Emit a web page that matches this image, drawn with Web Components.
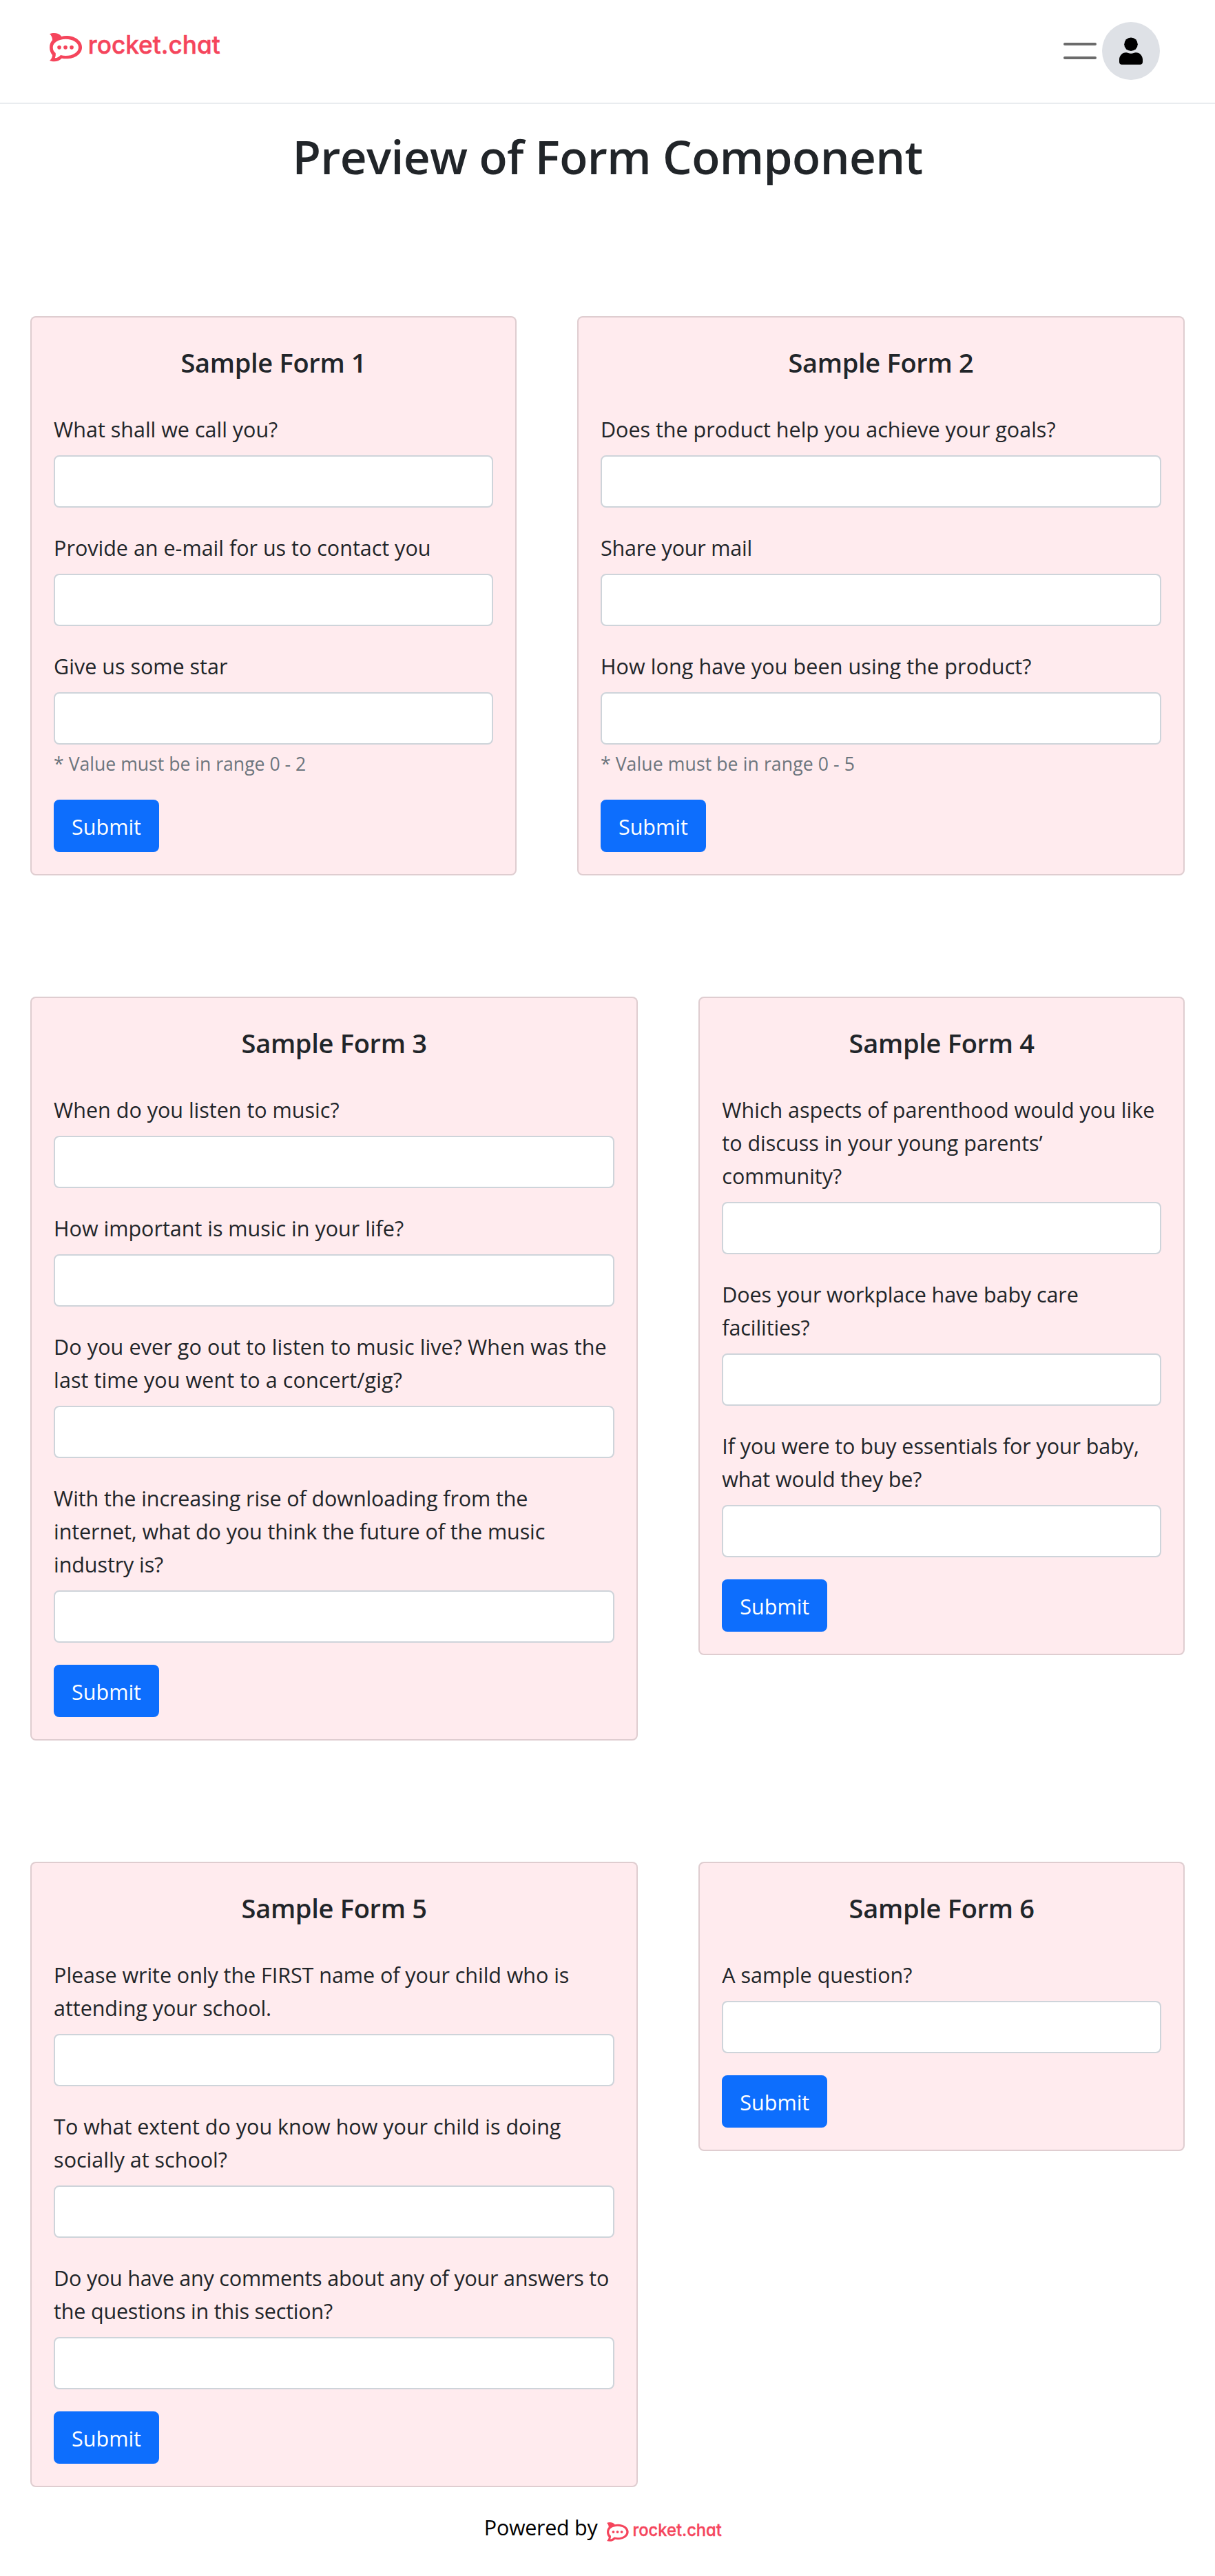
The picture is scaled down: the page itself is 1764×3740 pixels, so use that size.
<!DOCTYPE html>
<html lang="en">
<head>
<meta charset="utf-8">
<title>Preview of Form Component</title>
<style>
  body { margin: 0; background: #fff; color: #212529; font: 400 30.5px/48px "Open Sans", "Noto Sans", sans-serif; }
</style>
</head>
<body>
<preview-page>
  <site-nav slot="nav"></site-nav>
  <span slot="title">Preview of Form Component</span>
  <form-row>
    <form-card size="40" heading="Sample Form 1">
      <form-field>What shall we call you?</form-field>
      <form-field>Provide an e-mail for us to contact you</form-field>
      <form-field hint="* Value must be in range 0 - 2">Give us some star</form-field>
    </form-card>
    <form-card size="50" heading="Sample Form 2">
      <form-field>Does the product help you achieve your goals?</form-field>
      <form-field style="letter-spacing:-.2px">Share your mail</form-field>
      <form-field style="letter-spacing:.1px" hint="* Value must be in range 0 - 5">How long have you been using the product?</form-field>
    </form-card>
  </form-row>
  <form-row>
    <form-card size="50" heading="Sample Form 3">
      <form-field>When do you listen to music?</form-field>
      <form-field>How important is music in your life?</form-field>
      <form-field style="letter-spacing:.1px">Do you ever go out to listen to music live? When was the last time you went to a concert/gig?</form-field>
      <form-field style="letter-spacing:-.1px">With the increasing rise of downloading from the internet, what do you think the future of the music industry is?</form-field>
    </form-card>
    <form-card size="40" heading="Sample Form 4">
      <form-field>Which aspects of parenthood would you like to discuss in your young parents’ community?</form-field>
      <form-field style="letter-spacing:-.1px">Does your workplace have baby care facilities?</form-field>
      <form-field style="letter-spacing:-.1px">If you were to buy essentials for your baby, what would they be?</form-field>
    </form-card>
  </form-row>
  <form-row>
    <form-card size="50" heading="Sample Form 5">
      <form-field style="letter-spacing:-.05px">Please write only the FIRST name of your child who is attending your school.</form-field>
      <form-field>To what extent do you know how your child is doing socially at school?</form-field>
      <form-field style="letter-spacing:-.2px">Do you have any comments about any of your answers to the questions in this section?</form-field>
    </form-card>
    <form-card size="40" heading="Sample Form 6">
      <form-field>A sample question?</form-field>
    </form-card>
  </form-row>
  <powered-by slot="footer">Powered by</powered-by>
</preview-page>

<script>
const define = (name, render) => customElements.define(name, class extends HTMLElement {
  connectedCallback() {
    if (this.shadowRoot) return;
    this.attachShadow({ mode: 'open' }).innerHTML = render(this);
  }
});

define('rocket-logo', () => `
  <style>
    :host { display: block; width: 247.4px; }
    svg { display: block; width: 100%; height: auto; overflow: visible; }
    text { font: 500 110px Inter, sans-serif; font-feature-settings: "cv11"; }
  </style>
  <svg viewBox="0 0 742 124" fill="#f5455c" role="img" aria-label="rocket.chat">
    <path fill-rule="evenodd" d="M0 4C16-2 38-2 52 15C58 13 65 12 72 12C112 12 141 35 141 62C141 90 112 112 72 112C65 112 59 111 53 110C38 126 16 126 0 120C8 113 12 104 12 96C4 87 0 75 0 63C0 50 4 40 12 31C12 20 8 11 0 4ZM70 26C39 26 14 42 14 62C14 74 19 81 26 87C27 96 26 102 23 109C34 109 40 103 48 96C55 98 63 99 70 99C101 99 126 83 126 62C126 42 101 26 70 26Z"/>
    <circle cx="42" cy="62.500" r="8.500"/><circle cx="69" cy="62.500" r="8.500"/><circle cx="96" cy="62.500" r="8.500"/>
    <text x="167" y="91" textLength="576" lengthAdjust="spacingAndGlyphs" stroke="#f5455c" stroke-width="1.500">rocket.chat</text>
  </svg>`);

define('menu-toggle', () => `
  <style>
    :host { display: flex; flex-direction: column; gap: 15.5px; width: 48px; }
    i { height: 4.500px; border-radius: 2px; background: #6b6b6b; }
  </style><i></i><i></i>`);

define('user-avatar', () => `
  <style>
    :host { display: block; width: 84px; height: 84px; border-radius: 50%; background: #dee1e6; }
    svg { display: block; }
  </style>
  <svg width="84" height="84" viewBox="0 0 84 84">
    <circle cx="42" cy="32.300" r="9.800"/>
    <path d="M35 44.200C37 44.200 39 45.700 42 45.700S47 44.200 49 44.200C55 44.200 59 49.200 59 54.500V58C59 60.400 57.600 61.700 55.400 61.700H28.600C26.400 61.700 25 60.400 25 58V54.500C25 49.200 29 44.200 35 44.200Z"/>
  </svg>`);

define('site-nav', () => `
  <style>
    :host { display: flex; justify-content: space-between; align-items: center; height: 148px; padding: 0 80px 1px 72px; border-bottom: 2px solid #e9ecef; }
    rocket-logo { margin-bottom: 11px; }
    .tools { display: flex; align-items: center; gap: 8px; }
  </style>
  <rocket-logo></rocket-logo>
  <div class="tools"><menu-toggle></menu-toggle><user-avatar></user-avatar></div>`);

define('form-field', el => `
  <style>
    :host { display: block; margin-bottom: 32px; }
    label { display: block; padding-top: 2px; margin-bottom: 14px; }
    input { display: block; box-sizing: border-box; width: 100%; height: 76px; padding: 12px 24px; border: 2px solid #ced4da; border-radius: 8px; background: #fff; font: inherit; }
    small { display: block; box-sizing: border-box; height: 48px; padding-top: 4.500px; font-size: 26.6px; color: #6c757d; }
  </style>
  <label for="answer"><slot></slot></label>
  <input id="answer">
  ${el.hasAttribute('hint') ? `<small>${el.getAttribute('hint')}</small>` : ''}`);

define('form-card', el => `
  <style>
    :host { display: block; box-sizing: border-box; width: ${el.getAttribute('size')}vw; padding: 40px 32px 32px; border: 2px solid rgba(0,0,0,.125); border-radius: 8px; background: #ffebee; }
    h5 { margin: 0 0 47px; padding-top: 1px; text-align: center; font-size: 38px; font-weight: 600; line-height: 48px; letter-spacing: -.3px; }
    button { display: block; height: 76px; padding: 2px 24px 0; border: 2px solid #0d6efd; border-radius: 8px; background: #0d6efd; color: #fff; font: inherit; }
  </style>
  <h5>${el.getAttribute('heading')}</h5>
  <slot></slot>
  <button type="button">Submit</button>`);

define('form-row', () => `
  <style>
    :host { display: flex; align-items: flex-start; justify-content: space-between; padding: 0 2.5vw; }
  </style><slot></slot>`);

define('powered-by', () => `
  <style>
    :host { display: flex; justify-content: center; gap: 14px; padding: 34px 13px 0 0; color: #000; letter-spacing: -.3px; }
    rocket-logo { width: 166.7px; margin-top: 16.5px; letter-spacing: 0; }
  </style>
  <span><slot></slot></span><rocket-logo></rocket-logo>`);

define('preview-page', () => `
  <style>
    :host { display: block; }
    h1 { margin: 0; padding-top: 33.6px; text-align: center; font-size: 67.5px; font-weight: 600; line-height: 84.6px; letter-spacing: -.6px; }
    main { display: flex; flex-direction: column; gap: 176.4px; padding-top: 189.4px; }
  </style>
  <slot name="nav"></slot>
  <h1><slot name="title"></slot></h1>
  <main><slot></slot></main>
  <slot name="footer"></slot>`);
</script>
</body>
</html>
